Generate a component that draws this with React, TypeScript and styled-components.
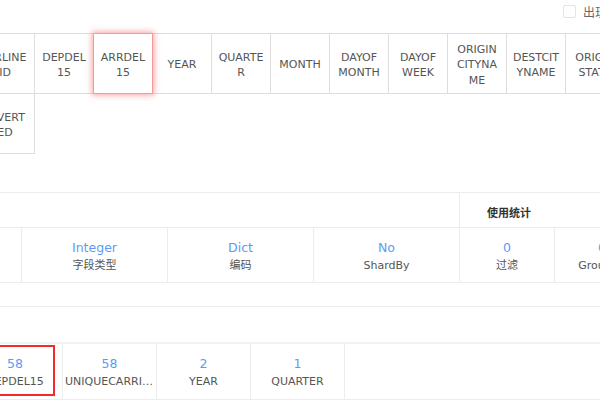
import styled, { createGlobalStyle } from "styled-components";

const GlobalStyle = createGlobalStyle`
  html, body {
    margin: 0;
    padding: 0;
    background: #fff;
    overflow: hidden;
  }
  body {
    width: 600px;
    font-family: "DejaVu Sans", "Noto Sans CJK SC", sans-serif;
    color: #555;
  }
`;

const Page = styled.div`
  width: 600px;
  height: 400px;
  overflow: hidden;
`;

const TopBar = styled.div`
  height: 33px;
  display: flex;
  justify-content: flex-end;
  align-items: flex-start;
  padding-top: 3px;
  box-sizing: border-box;
`;

const Filter = styled.label`
  display: flex;
  align-items: center;
  gap: 7px;
  margin-right: -31px;
  font-size: 12px;
  color: #666;
  font-family: "Noto Sans CJK SC", sans-serif;
  white-space: nowrap;
`;

const CheckBox = styled.span`
  width: 13px;
  height: 13px;
  border: 1px solid #e3e3e3;
  border-radius: 2px;
  box-sizing: border-box;
  background: #fff;
`;

const TileWrap = styled.div`
  display: flex;
  flex-wrap: wrap;
  width: 768px;
  margin-left: -25px;
`;

const Tile = styled.div<{ $active?: boolean }>`
  width: 60px;
  height: 61px;
  box-sizing: border-box;
  margin: 0 -1px -1px 0;
  padding-top: 3px;
  border: 1px solid ${(p) => (p.$active ? "#f59a9a" : "#dedede")};
  box-shadow: ${(p) => (p.$active ? "0 0 6px 1px rgba(245, 80, 80, 0.55)" : "none")};
  position: relative;
  z-index: ${(p) => (p.$active ? 1 : 0)};
  background: #fff;
  display: flex;
  flex-direction: column;
  align-items: center;
  justify-content: center;
  text-align: center;
  font-size: 11px;
  line-height: 15.5px;
  color: #555;
  white-space: nowrap;
`;

const FieldTable = styled.div`
  margin-top: 39px;
  margin-left: -125px;
  display: grid;
  grid-template-columns: repeat(4, 146px) 95px 95px;
  border-top: 1px solid #ececec;
`;

const HeadCell = styled.div<{ $span: string }>`
  grid-column: ${(p) => p.$span};
  height: 35px;
  box-sizing: border-box;
  padding: 3px 0 0 27px;
  border-bottom: 1px solid #ececec;
  border-left: 1px solid #ececec;
  display: flex;
  align-items: center;
  font-size: 11px;
  font-weight: bold;
  color: #333;
  font-family: "Noto Sans CJK SC", sans-serif;
  &:first-child {
    border-left: none;
  }
`;

const InfoCell = styled.div`
  height: 55px;
  box-sizing: border-box;
  padding-top: 2px;
  border-left: 1px solid #ececec;
  border-bottom: 1px solid #ececec;
  display: flex;
  flex-direction: column;
  align-items: center;
  justify-content: center;
  gap: 3px;
  &:first-child {
    border-left: none;
  }
`;

const Value = styled.div`
  font-size: 12.5px;
  color: #5b9bf7;
  line-height: 15px;
`;

const Label = styled.div`
  max-width: 100%;
  padding: 0 2px;
  box-sizing: border-box;
  font-size: 11px;
  color: #555;
  line-height: 15px;
  white-space: nowrap;
  overflow: hidden;
  text-overflow: ellipsis;
`;

const EmptyRow = styled.div`
  height: 23px;
  border-bottom: 1px solid #ececec;
`;

const StatGrid = styled.div`
  margin-top: 35px;
  margin-left: -32px;
  display: grid;
  grid-template-columns: repeat(4, 94px) 1fr;
  border-top: 2px solid #f2f2f2;
  border-bottom: 1px solid #ececec;
`;

const StatCell = styled.div<{ $marked?: boolean }>`
  height: 55px;
  box-sizing: border-box;
  padding-top: 1px;
  position: relative;
  border-left: 1px solid #ececec;
  display: flex;
  flex-direction: column;
  align-items: center;
  justify-content: center;
  gap: 3px;
  &:first-child {
    border-left: none;
  }
  ${(p) =>
    p.$marked &&
    `
    &::after {
      content: "";
      position: absolute;
      left: 7px;
      right: 7px;
      top: 1px;
      bottom: 3px;
      border: 2px solid #f02b2b;
    }
  `}
`;

const tiles: { name: string; lines: string[] }[] = [
  { name: "AIRLINEID", lines: ["AIRLINE", "ID"] },
  { name: "DEPDEL15", lines: ["DEPDEL", "15"] },
  { name: "ARRDEL15", lines: ["ARRDEL", "15"] },
  { name: "YEAR", lines: ["YEAR"] },
  { name: "QUARTER", lines: ["QUARTE", "R"] },
  { name: "MONTH", lines: ["MONTH"] },
  { name: "DAYOFMONTH", lines: ["DAYOF", "MONTH"] },
  { name: "DAYOFWEEK", lines: ["DAYOF", "WEEK"] },
  { name: "ORIGINCITYNAME", lines: ["ORIGIN", "CITYNA", "ME"] },
  { name: "DESTCITYNAME", lines: ["DESTCIT", "YNAME"] },
  { name: "ORIGINSTATE", lines: ["ORIGIN", "STATE"] },
  { name: "DESTSTATE", lines: ["DESTST", "ATE"] },
  { name: "CARRIER", lines: ["CARRIE", "R"] },
  { name: "DIVERTED", lines: ["DIVERT", "ED"] },
];

const infos = [
  { value: "Integer", label: "字段类型" },
  { value: "Dict", label: "编码" },
  { value: "No", label: "ShardBy" },
  { value: "0", label: "过滤" },
  { value: "0", label: "GroupBy" },
];

const stats = [
  { value: "58", label: "DEPDEL15" },
  { value: "58", label: "UNIQUECARRIER" },
  { value: "2", label: "YEAR" },
  { value: "1", label: "QUARTER" },
];

export default function App() {
  return (
    <Page>
      <GlobalStyle />
      <TopBar>
        <Filter>
          <CheckBox />
          <span>出现次数</span>
        </Filter>
      </TopBar>
      <TileWrap>
        {tiles.map((t) => (
          <Tile key={t.name} $active={t.name === "ARRDEL15"} title={t.name}>
            {t.lines.map((l, i) => (
              <span key={i}>{l}</span>
            ))}
          </Tile>
        ))}
      </TileWrap>
      <FieldTable>
        <HeadCell $span="1 / 5" />
        <HeadCell $span="5 / 7">使用统计</HeadCell>
        <InfoCell>
          <Value>INTEGER</Value>
          <Label>列名</Label>
        </InfoCell>
        {infos.map((i) => (
          <InfoCell key={i.label}>
            <Value>{i.value}</Value>
            <Label>{i.label}</Label>
          </InfoCell>
        ))}
      </FieldTable>
      <EmptyRow />
      <StatGrid>
        {stats.map((s, i) => (
          <StatCell key={s.label} $marked={i === 0}>
            <Value>{s.value}</Value>
            <Label>{s.label}</Label>
          </StatCell>
        ))}
        <StatCell />
      </StatGrid>
    </Page>
  );
}
